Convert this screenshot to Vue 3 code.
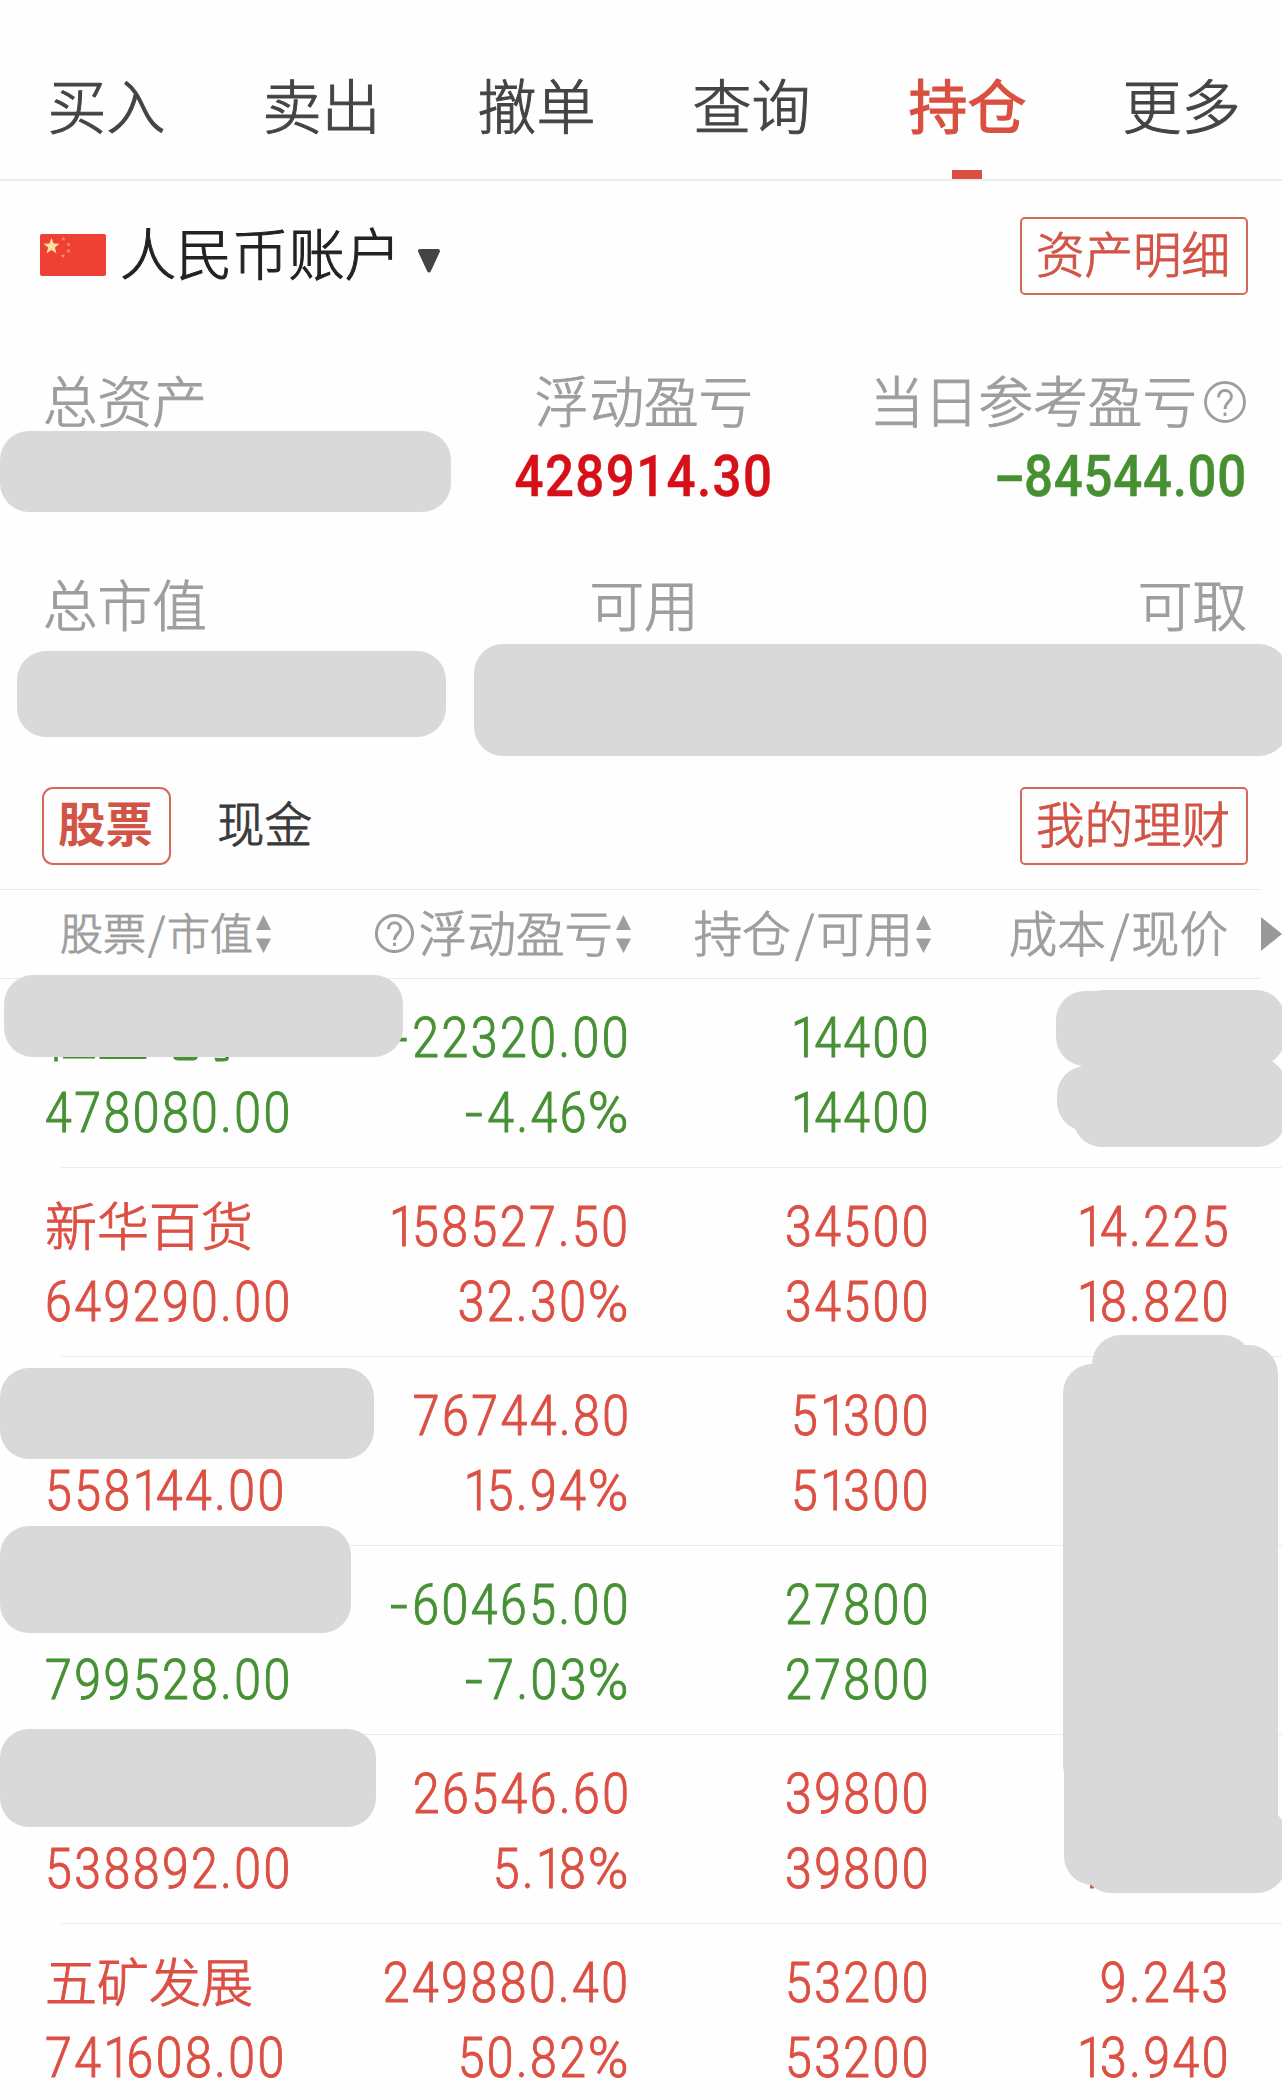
<template>
  <div class="position-page">
    <nav class="trade-nav">
      <div v-for="tab in tabs" :key="tab" class="nav-item" :class="{ active: tab === '持仓' }">{{ tab }}</div>
    </nav>

    <section class="account-bar">
      <svg class="flag" viewBox="0 0 66 42">
        <rect width="66" height="42" rx="2" fill="#ee4035" />
        <polygon :points="star(11.5, 12.5, 8.5)" fill="#fbdf9d" />
        <polygon :points="star(23.5, 5, 2.3)" fill="#f59a6b" />
        <polygon :points="star(28.5, 10.5, 2.3)" fill="#f59a6b" />
        <polygon :points="star(28.5, 17, 2.3)" fill="#f59a6b" />
        <polygon :points="star(23, 22, 2.3)" fill="#f59a6b" />
      </svg>
      <span class="account-name">人民币账户</span>
      <svg class="account-arrow" viewBox="0 0 24 24">
        <path d="M3 2H21L12 21.500Z" fill="#444" stroke="#444" stroke-width="4" stroke-linejoin="round" />
      </svg>
      <button class="outline-btn">资产明细</button>
    </section>

    <section class="summary">
      <div class="summary-cell">
        <div class="summary-label">总资产</div>
      </div>
      <div class="summary-cell center">
        <div class="summary-label">浮动盈亏</div>
        <div class="summary-value profit">428914.30</div>
      </div>
      <div class="summary-cell right">
        <div class="summary-label">当日参考盈亏<svg class="help" viewBox="0 0 42 42">
          <circle cx="21" cy="21" r="19.500" />
          <path d="M14.500 16.500C14.500 12 17.300 9.500 21 9.500S27.500 12 27.500 15.700C27.500 20.500 21 21.500 21 28" />
          <path d="M21 31.500V35" />
        </svg></div>
        <div class="summary-value loss"><span class="dash">-</span>84544.00</div>
      </div>
    </section>

    <section class="summary second">
      <div class="summary-cell">
        <div class="summary-label">总市值</div>
      </div>
      <div class="summary-cell center">
        <div class="summary-label">可用</div>
      </div>
      <div class="summary-cell right">
        <div class="summary-label">可取</div>
      </div>
    </section>

    <section class="type-bar">
      <button class="type-tab active">股票</button>
      <button class="type-tab">现金</button>
      <button class="outline-btn">我的理财</button>
    </section>

    <div class="table-head">
      <div class="head-cell first">股票<span class="slash">/</span>市值<svg class="sort" viewBox="0 0 15 38"><path d="M7.500 0L15 15H0ZM7.500 38L15 23.500H0Z" /></svg></div>
      <div class="head-cell"><svg class="help small" viewBox="0 0 42 42">
        <circle cx="21" cy="21" r="19.500" />
        <path d="M14.500 16.500C14.500 12 17.300 9.500 21 9.500S27.500 12 27.500 15.700C27.500 20.500 21 21.500 21 28" />
        <path d="M21 31V34.500" />
      </svg>浮动盈亏<svg class="sort" viewBox="0 0 15 38"><path d="M7.500 0L15 15H0ZM7.500 38L15 23.500H0Z" /></svg></div>
      <div class="head-cell">持仓<span class="slash">/</span>可用<svg class="sort" viewBox="0 0 15 38"><path d="M7.500 0L15 15H0ZM7.500 38L15 23.500H0Z" /></svg></div>
      <div class="head-cell last">成本<span class="slash">/</span>现价</div>
      <svg class="head-more" viewBox="0 0 21 34"><path d="M0 0L21 17L0 34Z" /></svg>
    </div>

    <div class="table-body">
      <div v-for="(row, r) in rows" :key="r" class="stock-row" :class="row.down ? 'down' : 'up'">
        <div v-for="(col, c) in row.cols" :key="c" class="stock-cell">
          <div v-for="(text, t) in col" :key="t" class="stock-line">
            <span v-if="c === 0 && t === 0" class="stock-name">{{ text }}</span>
            <span v-else class="num"><span v-for="(ch, i) in text" :key="i" :class="charClass(ch)">{{ ch }}</span></span>
          </div>
        </div>
      </div>
    </div>

    <div v-for="(m, i) in masks" :key="'m' + i" class="mask" :style="maskStyle(m)"></div>
  </div>
</template>

<script setup>
const tabs = ['买入', '卖出', '撤单', '查询', '持仓', '更多'];

// cols: [名称, 市值], [盈亏, 盈亏比], [持仓, 可用], [成本, 现价]
const rows = [
  { down: true, cols: [['恒立电子', '478080.00'], ['-22320.00', '-4.46%'], ['14400', '14400'], ['', '']] },
  { down: false, cols: [['新华百货', '649290.00'], ['158527.50', '32.30%'], ['34500', '34500'], ['14.225', '18.820']] },
  { down: false, cols: [['', '558144.00'], ['76744.80', '15.94%'], ['51300', '51300'], ['', '']] },
  { down: true, cols: [['', '799528.00'], ['-60465.00', '-7.03%'], ['27800', '27800'], ['', '']] },
  { down: false, cols: [['', '538892.00'], ['26546.60', '5.18%'], ['39800', '39800'], ['', '13.540']] },
  { down: false, cols: [['五矿发展', '741608.00'], ['249880.40', '50.82%'], ['53200', '53200'], ['9.243', '13.940']] }
];

// 隐私遮挡块: [x, y, width, height]
const masks = [
  [0, 431, 451, 81],
  [17, 651, 429, 86],
  [474, 644, 814, 112],
  [4, 975, 399, 82],
  [0, 1368, 374, 91],
  [0, 1526, 351, 107],
  [0, 1729, 376, 98],
  [1056, 991, 229, 75],
  [1075, 990, 210, 76],
  [1057, 1066, 225, 65],
  [1073, 1057, 213, 90],
  [1092, 1335, 160, 90],
  [1063, 1364, 120, 430],
  [1130, 1345, 148, 500],
  [1064, 1700, 160, 185],
  [1082, 1806, 204, 87]
];

const maskStyle = ([x, y, w, h]) => ({
  left: x + 'px',
  top: y + 'px',
  width: w + 'px',
  height: h + 'px'
});

// 数字 1、负号和百分号的字宽单独处理
const charClass = (ch) => ({ one: ch === '1', dash: ch === '-', percent: ch === '%' });

const star = (cx, cy, r) => {
  const pts = [];
  for (let i = 0; i < 10; i++) {
    const rad = i % 2 ? r * 0.42 : r;
    const a = (Math.PI / 5) * i - Math.PI / 2;
    pts.push((cx + rad * Math.cos(a)).toFixed(2) + ',' + (cy + rad * Math.sin(a)).toFixed(2));
  }
  return pts.join(' ');
};
</script>

<style>
body {
  margin: 0;
  background: #fefefe;
}
</style>

<style scoped>
.position-page {
  position: relative;
  width: 1282px;
  height: 2100px;
  overflow: hidden;
  background: #fefefe;
  font-family: "Noto Sans CJK SC", sans-serif;
  font-weight: 300;
  -webkit-text-stroke: 1px currentColor;
  color: #444;
}

.trade-nav {
  display: grid;
  grid-template-columns: repeat(6, 215px);
  height: 179px;
  border-bottom: 2px solid #ececec;
}

.nav-item {
  position: relative;
  padding: 60px 2px 0 0;
  font-size: 59px;
  line-height: 88px;
  text-align: center;
}

.nav-item.active {
  padding-right: 0;
  color: #d95040;
  font-weight: 400;
  -webkit-text-stroke-width: 1.1px;
}

.nav-item.active::after {
  content: "";
  position: absolute;
  left: 92px;
  bottom: 0;
  width: 30px;
  height: 9px;
  background: #d95040;
}

.account-bar {
  display: flex;
  align-items: center;
  height: 78px;
  margin-top: 36px;
  padding: 0 34px 0 40px;
}

.flag {
  width: 66px;
  height: 42px;
  margin-top: -2px;
}

.account-name {
  margin: -10px 0 0 14px;
  font-size: 56.2px;
  line-height: 78px;
  color: #222;
}

.account-arrow {
  width: 24px;
  height: 24px;
  margin: 9px 0 0 16px;
}

.outline-btn {
  box-sizing: border-box;
  width: 228px;
  height: 78px;
  margin-left: auto;
  padding: 0 2px 8px 0;
  border: 2px solid #d5685d;
  border-radius: 5px;
  background: none;
  font: inherit;
  font-size: 48.5px;
  line-height: 66px;
  color: #d25446;
}

.summary {
  display: grid;
  grid-template-columns: 400px 402px 402px;
  height: 204px;
  padding: 64px 35px 0 43px;
  box-sizing: border-box;
}

.summary.second {
  height: 288px;
}

.summary-label {
  display: flex;
  align-items: center;
  height: 80px;
  font-size: 54.6px;
  line-height: 80px;
  white-space: nowrap;
  color: #9e9e9e;
}

.center .summary-label {
  justify-content: center;
}

.right .summary-label {
  justify-content: flex-end;
}

.help {
  width: 42px;
  height: 42px;
  margin: 6px 1px 0 7px;
  fill: none;
  stroke: #9e9e9e;
  stroke-width: 2.8;
}

.help.small {
  width: 39px;
  height: 39px;
  margin: 6px 5px 0 0;
  stroke-width: 3.2;
}

.summary-value {
  padding-top: 5px;
  font-family: Roboto, sans-serif;
  font-size: 58px;
  font-weight: 500;
  -webkit-text-stroke-width: 0.5px;
  line-height: 64px;
  letter-spacing: 1.6px;
  white-space: nowrap;
  text-align: center;
  transform: scaleX(0.88);
}

.right .summary-value {
  letter-spacing: 0.8px;
  text-align: right;
  transform-origin: right;
}

.profit {
  color: #d60f18;
}

.loss {
  color: #479032;
}

.loss .dash {
  display: inline-block;
  margin-right: 5px;
  transform: scaleX(1.8);
}

.type-bar {
  display: flex;
  height: 78px;
  padding: 0 34px 0 42px;
}

.type-tab {
  box-sizing: border-box;
  width: 129px;
  height: 78px;
  padding: 0 2px 8px 0;
  border: 2px solid transparent;
  background: none;
  font: inherit;
  font-size: 47.5px;
  line-height: 66px;
  color: #3a3a3a;
}

.type-tab.active {
  margin-right: 30px;
  border-color: #d5685d;
  border-radius: 11px;
  font-weight: 700;
  -webkit-text-stroke-width: 0;
  color: #d25446;
}

.table-head {
  display: grid;
  grid-template-columns: 330px 256px 300px 301px 1fr;
  align-items: center;
  box-sizing: border-box;
  height: 90px;
  margin-top: 24px;
  padding-left: 45px;
  background:
    linear-gradient(#e9e9e9, #e9e9e9) 0 0 / 1260px 1px no-repeat,
    linear-gradient(#e9e9e9, #e9e9e9) 0 100% / 1260px 1px no-repeat;
}

.head-cell {
  display: flex;
  align-items: center;
  justify-content: flex-end;
  margin-top: -7px;
  font-size: 48.5px;
  line-height: 80px;
  white-space: nowrap;
  color: #9e9e9e;
}

.head-cell.first {
  justify-content: flex-start;
  padding-left: 15px;
  font-size: 43px;
}

.head-cell.last {
  padding-right: 4px;
}

.slash {
  margin: 0 2px 0 4px;
}

.first .slash {
  margin: 0 2px;
}

.sort {
  width: 15px;
  height: 38px;
  margin: 7px 0 0 3px;
  fill: #9e9e9e;
}

.head-more {
  width: 21px;
  height: 34px;
  justify-self: end;
  fill: #999;
}

.stock-row {
  position: relative;
  display: grid;
  grid-template-columns: 291px 295px 300px 300px;
  box-sizing: border-box;
  height: 189px;
  padding: 22px 0 0 45px;
}

.stock-row::after {
  content: "";
  position: absolute;
  left: 61px;
  right: 0;
  bottom: 0;
  height: 1px;
  background: #ebebeb;
}

.up {
  color: #dc5044;
}

.down {
  color: #469134;
}

.stock-cell {
  text-align: right;
}

.stock-cell:first-child {
  text-align: left;
}

.stock-line {
  height: 75px;
  line-height: 75px;
  white-space: nowrap;
}

.stock-name {
  display: inline-block;
  margin-top: -4px;
  font-size: 52px;
}

.num {
  display: inline-block;
  font-family: Roboto, sans-serif;
  font-size: 54.8px;
  letter-spacing: 2.8px;
  transform: scaleX(0.88);
  transform-origin: right;
}

.stock-cell:first-child .num {
  transform-origin: left;
}

.num .one {
  letter-spacing: -4.2px;
}

.num .dash {
  display: inline-block;
  margin-right: 4px;
  transform: scaleX(1.3);
}

/* 百分号略加宽 */
.num .percent {
  display: inline-block;
  margin-left: 5px;
  transform: scaleX(1.14);
  transform-origin: right;
}

.mask {
  position: absolute;
  border-radius: 29px;
  background: #d9d9d9;
}
</style>
